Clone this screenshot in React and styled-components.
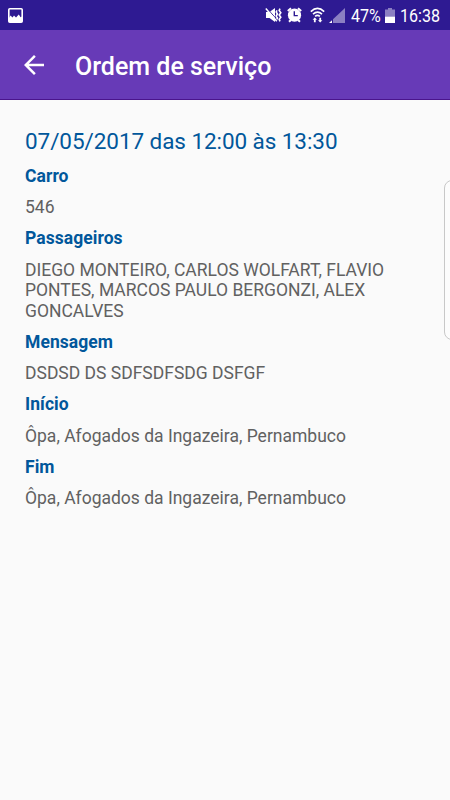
import React from 'react';
import styled, { createGlobalStyle } from 'styled-components';

const GlobalStyle = createGlobalStyle`
  * {
    box-sizing: border-box;
  }

  body {
    margin: 0;
    background: #fafafa;
    font-family: Roboto, 'Liberation Sans', sans-serif;
  }
`;

const Screen = styled.div`
  position: relative;
  width: 450px;
  height: 800px;
  overflow: hidden;
  background: #fafafa;
`;

const StatusBar = styled.div`
  display: flex;
  align-items: center;
  height: 30px;
  padding: 0 8px;
  background: #2e1a92;
  color: #fff;
`;

const StatusIcon = styled.svg`
  display: block;
  flex: none;
  margin-left: ${(props) => props.$gap || 0}px;
`;

const Spacer = styled.div`
  flex: 1;
`;

const StatusText = styled.span`
  width: ${(props) => props.$width}px;
  margin-left: ${(props) => props.$gap}px;
  font-size: 19px;
  line-height: 30px;
  white-space: nowrap;
  transform: translateY(1px) scaleX(0.845);
  transform-origin: left center;
`;

const Toolbar = styled.header`
  display: flex;
  align-items: center;
  height: 70px;
  padding-left: 19px;
  background: #673ab7;
  border-bottom: 1px solid #4a148c;
  color: #fff;
`;

const BackButton = styled.button`
  display: flex;
  width: 30px;
  height: 30px;
  padding: 0;
  border: 0;
  background: none;
  color: inherit;
`;

const Title = styled.h1`
  margin: 4px 0 0 26px;
  font-size: 25px;
  font-weight: 500;
  line-height: 30px;
`;

const Content = styled.main`
  display: flex;
  flex-direction: column;
  gap: 10.75px;
  padding: 28px 25px;
`;

const Period = styled.h2`
  margin: 0 0 0.6px;
  color: #01579b;
  font-size: 22.5px;
  font-weight: 400;
  letter-spacing: -0.07px;
  line-height: 26.4px;
`;

const Field = styled.section`
  display: flex;
  flex-direction: column;
  gap: 10.75px;
`;

const Label = styled.div`
  color: #01579b;
  font-size: 17.5px;
  font-weight: 700;
  letter-spacing: 0.06px;
  line-height: 20.5px;
`;

const Value = styled.div`
  color: #616161;
  font-size: 17.5px;
  line-height: 20.5px;
`;

const EdgePanel = styled.div`
  position: absolute;
  top: 180px;
  right: -10px;
  width: 16px;
  height: 160px;
  border: 1px solid #c8c8c8;
  border-radius: 8px;
  background: #fcfcfc;
`;

const fields = [
  { label: 'Carro', value: '546' },
  {
    label: 'Passageiros',
    value: 'DIEGO MONTEIRO, CARLOS WOLFART, FLAVIO PONTES, MARCOS PAULO BERGONZI, ALEX GONCALVES',
  },
  { label: 'Mensagem', value: 'DSDSD DS SDFSDFSDG DSFGF' },
  { label: 'Início', value: 'Ôpa, Afogados da Ingazeira, Pernambuco' },
  { label: 'Fim', value: 'Ôpa, Afogados da Ingazeira, Pernambuco' },
];

const PictureIcon = () => (
  <StatusIcon width="15" height="15" viewBox="0 0 15 15">
    <rect x="0.8" y="0.8" width="13.4" height="13.4" rx="1" fill="none" stroke="#fff" strokeWidth="1.6" />
    <path d="M1 10 2.5 7.6 4.5 9.6 6 7.6 8 9.4 10.8 6.6 12.6 9.2 14 8.5V14H1Z" fill="#fff" />
  </StatusIcon>
);

const MuteIcon = () => (
  <StatusIcon width="17" height="16" viewBox="0 0 17 16">
    <path d="M1 5H4.5L10 1V15L4.5 11H1Z" fill="#fff" />
    <path d="M2 1.3 12.3 13" stroke="#2e1a92" strokeWidth="1" />
    <path d="M0.8 1.6 11.8 14.2" stroke="#fff" strokeWidth="1.5" />
    <path d="M12 3.4 11.2 5 12.4 7 11.2 9 12.4 11 11.8 12.4M15 1.6 14.2 3.5 15.8 5.7 14.2 8 15.8 10.2 14.2 12.4 15 14.4" fill="none" stroke="#fff" strokeWidth="1.6" />
  </StatusIcon>
);

const AlarmIcon = () => (
  <StatusIcon $gap={5} width="15" height="16" viewBox="0 0 15 16">
    <path d="M0.8 4 4 1.2M14.2 4 11 1.2M2 14.8 4 13M13 14.8 11 13" stroke="#fff" strokeWidth="2" />
    <circle cx="7.5" cy="8.2" r="6.6" fill="#fff" />
    <path d="M7.3 4.2V8.6H10.8" fill="none" stroke="#2e1a92" strokeWidth="1.4" />
  </StatusIcon>
);

const WifiIcon = () => (
  <StatusIcon $gap={8} width="15" height="16" viewBox="0 0 15 16">
    <path d="M0.8 4.6Q7.5-1.7 14.2 4.6M3 7.1Q7.5 3 12 7.1M5.1 9.3Q7.5 7.3 9.9 9.3" fill="none" stroke="#fff" strokeWidth="1.6" />
    <path d="M4.8 10.4 7 12.7H5.7V15.2H3.9V12.7H2.6ZM10.2 15.5 8 13.2H9.3V10.7H11.1V13.2H12.4Z" fill="#fff" />
  </StatusIcon>
);

const SignalIcon = () => (
  <StatusIcon $gap={4} width="16" height="15" viewBox="0 0 16 15">
    <path d="M4 11.2 16 0V15H4Z" fill="#8b7fc2" />
    <path d="M0 15 3 12.2V15Z" fill="#fff" />
  </StatusIcon>
);

const BatteryIcon = () => (
  <StatusIcon $gap={4} width="10" height="15" viewBox="0 0 10 15">
    <path d="M3 0H7V1.5H10V8.5H0V1.5H3Z" fill="#8b7fc2" />
    <path d="M0 8.5H10V15H0Z" fill="#fff" />
  </StatusIcon>
);

const App = () => {
  return (
    <Screen>
      <GlobalStyle />
      <StatusBar>
        <PictureIcon />
        <Spacer />
        <MuteIcon />
        <AlarmIcon />
        <WifiIcon />
        <SignalIcon />
        <StatusText $gap={6} $width={30}>47%</StatusText>
        <BatteryIcon />
        <StatusText $gap={5} $width={42}>16:38</StatusText>
      </StatusBar>
      <Toolbar>
        <BackButton aria-label="Voltar">
          <svg width="30" height="30" viewBox="0 0 24 24" fill="currentColor">
            <path d="M20 11H7.83l5.59-5.59L12 4l-8 8 8 8 1.41-1.41L7.83 13H20v-2z" />
          </svg>
        </BackButton>
        <Title>Ordem de serviço</Title>
      </Toolbar>
      <Content>
        <Period>07/05/2017 das 12:00 às 13:30</Period>
        {fields.map(({ label, value }) => (
          <Field key={label}>
            <Label>{label}</Label>
            <Value>{value}</Value>
          </Field>
        ))}
      </Content>
      <EdgePanel />
    </Screen>
  );
};

export default App;
